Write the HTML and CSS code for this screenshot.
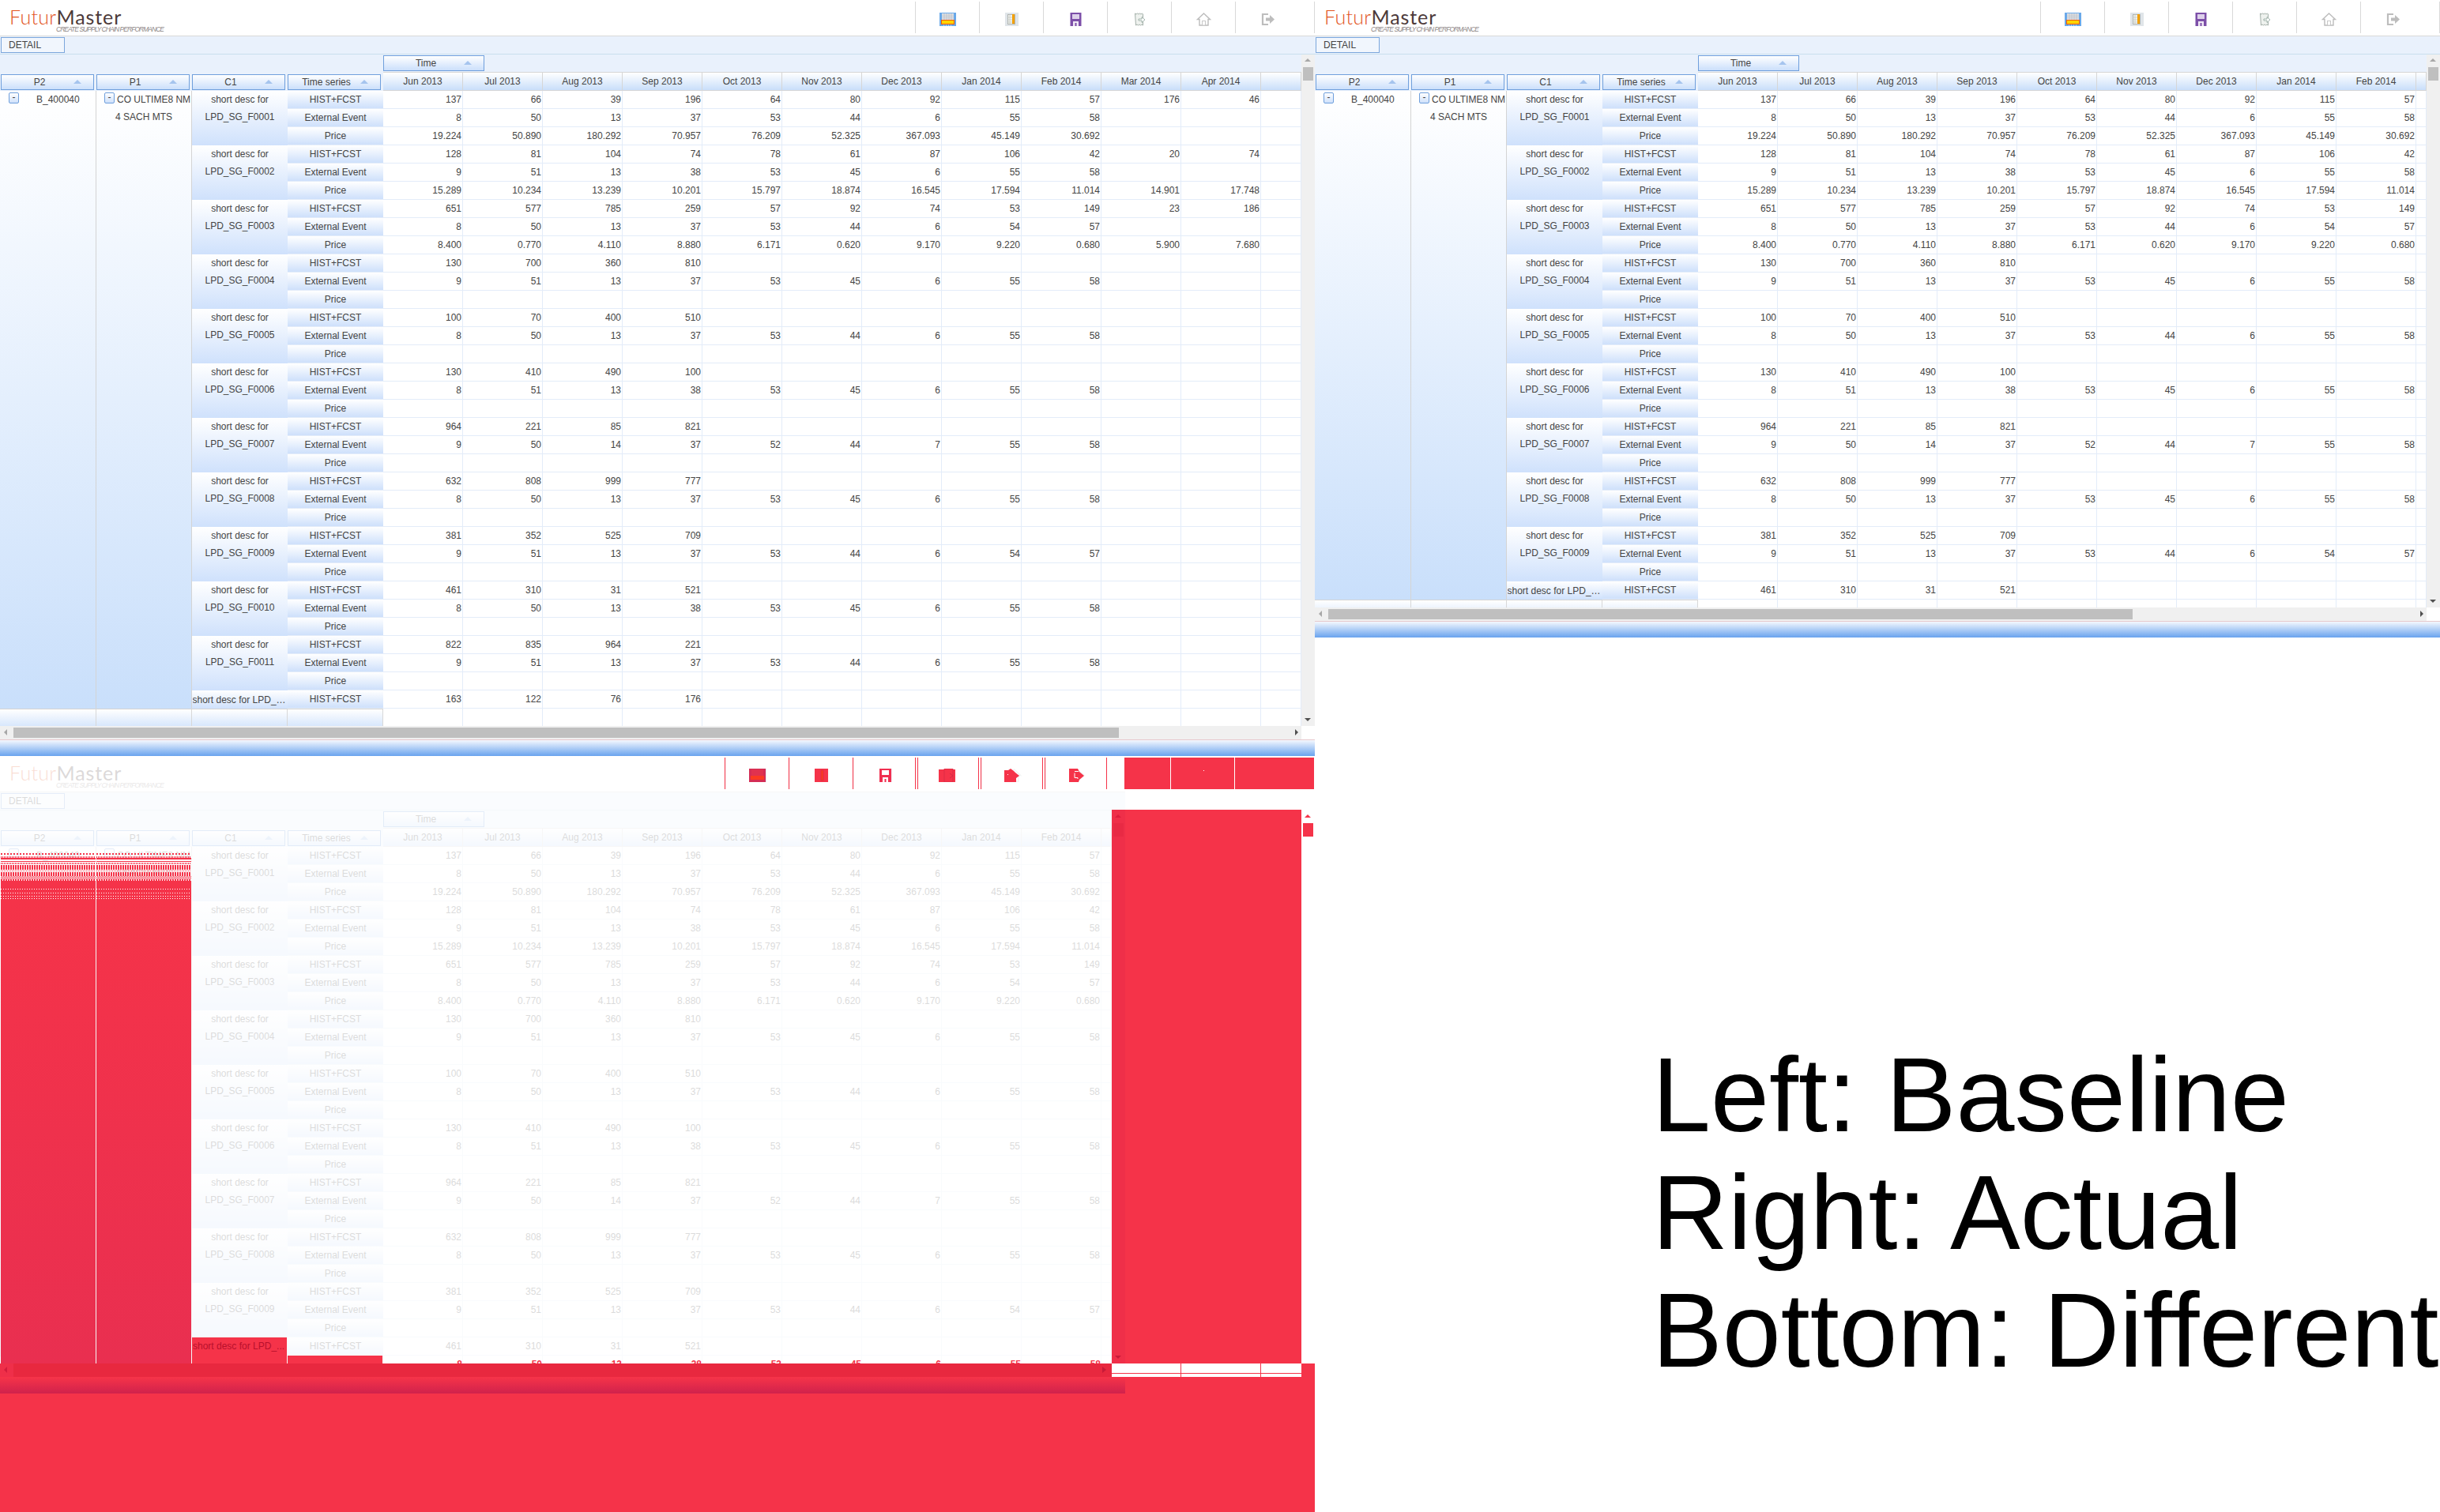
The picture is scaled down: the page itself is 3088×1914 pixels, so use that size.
FILE: index.html
```html
<!DOCTYPE html>
<html lang="en">
<head>
<meta charset="utf-8">
<title>Baseline / Actual / Different</title>
<link rel="stylesheet" href="styles.css">
</head>
<body>
<svg class="sprite" aria-hidden="true">
  <symbol id="i-a" viewBox="0 0 21 17">
    <rect width="21" height="17" fill="#6aa9e9"/>
    <rect x="3" y="1" width="15" height="8" fill="#e4e6ea"/>
    <path d="M3 3h15M3 5h15M3 7h15M6 1v8M9 1v8M12 1v8M15 1v8" stroke="#b4b8c0" stroke-width=".6"/>
    <rect x="2.500" y="9.500" width="16" height="5" fill="#ffd500" stroke="#ee5a00"/>
    <path d="M5 16h1M8 16h1M11 16h1M14 16h1" stroke="#e8eef6"/>
  </symbol>
  <symbol id="i-b" viewBox="0 0 21 17">
    <rect x="2" width="17" height="17" fill="#e0e5e9"/>
    <rect x="5.500" y="2.500" width="9" height="12" fill="#f2f3ee" stroke="#b0b4b0"/>
    <path d="M5 6h6M5 9h6M5 12h6M8 2v12" stroke="#c0c4c0" stroke-width=".7"/>
    <rect x="11" y="2" width="3" height="12" fill="#f3a000"/>
  </symbol>
  <symbol id="i-c" viewBox="0 0 21 17">
    <path d="M3.500 0h14v17h-14z" fill="#7c4fa8"/>
    <rect x="6" y="2" width="9" height="6" fill="#ddd0ea"/>
    <rect x="7" y="11" width="7" height="6" fill="#efe8f5"/>
    <rect x="9.500" y="13" width="2" height="4" fill="#7c4fa8"/>
  </symbol>
  <symbol id="i-d" viewBox="0 0 21 17">
    <path d="M4.500 1l1.500 1 1.500-1 1.500 1 1.500-1 1.500 1 1.500-1 1 1v14l-1.500-1-1.500 1-1.500-1-1.500 1-1.500-1-1.500 1z" fill="#eff2ef" stroke="#a3afa9"/>
    <path d="M9 8h4V5.500l4 3.500-4 3.500V10H9z" fill="#fff" stroke="#8ea39a" stroke-width=".8"/>
  </symbol>
  <symbol id="i-e" viewBox="0 0 21 17">
    <path d="M10.500 1L18.500 8.500H16V16H5V8.500H2.500z" fill="#fff" stroke="#bcbcbc" stroke-width="1.400"/>
    <rect x="8.500" y="10.500" width="4" height="5.500" fill="#fff" stroke="#c8c8c8"/>
  </symbol>
  <symbol id="i-f" viewBox="0 0 21 17">
    <path d="M11 2H4v13h7" fill="none" stroke="#bdbdbd" stroke-width="2.200"/>
    <path d="M8 6.500h5V3l6 5.500-6 5.500v-3.500H8z" fill="#bdbdbd"/>
  </symbol>
  <symbol id="m-a" viewBox="0 0 21 17">
    <rect width="21" height="17" fill="#d42d55"/>
    <rect x="3" y="1" width="15" height="8" fill="#e0324f"/>
    <rect x="2" y="9" width="17" height="5" fill="#fb3a22"/>
  </symbol>
  <symbol id="m-b" viewBox="0 0 17 17">
    <rect width="17" height="17" fill="#f53349"/>
    <rect x="8" y="2" width="3" height="13" fill="#fb3a22" stroke="#d42a45" stroke-width=".6"/>
  </symbol>
  <symbol id="m-c" viewBox="0 0 15 17">
    <rect width="15" height="17" fill="#f02f50"/>
    <rect x="3" y="2" width="9" height="6" fill="#fff"/>
    <rect x="4" y="11" width="7" height="6" fill="#fff"/>
    <rect x="6.500" y="13" width="2" height="4" fill="#f02f50"/>
  </symbol>
  <symbol id="m-d" viewBox="0 0 21 17">
    <rect y="1" width="21" height="16" fill="#f53349"/>
    <rect x="7" width="11" height="17" fill="#f53349" stroke="#d42a45" stroke-width=".7"/>
    <path d="M14 6l4 3-4 3" fill="none" stroke="#d42a45"/>
  </symbol>
  <symbol id="m-e" viewBox="0 0 19 17">
    <path d="M0 2H5L8 0 12 3 14 5 19 9 15 12V17H0z" fill="#f53349"/>
    <rect x="4" y="7" width="1" height="1" fill="#fff"/>
  </symbol>
  <symbol id="m-f" viewBox="0 0 19 17">
    <path d="M0 0H11L13 4 19 9 13 14 12 17H0z" fill="#f53349"/>
    <path d="M7 3.500h5M7 5.500v6h4V13" fill="none" stroke="#fff"/>
  </symbol>
</svg>

<main class="screen">
  <div class="col col--left">
    <section class="panel panel--base" data-panel="base"></section>
    <section class="diff">
      <div class="panel panel--faded" data-panel="actual"></div>
      <div class="diff-overlay" id="diff-overlay"></div>
    </section>
  </div>
  <div class="col col--right">
    <section class="panel panel--actual" data-panel="actual"></section>
    <p class="legend">Left: Baseline<br>Right: Actual<br>Bottom: Different</p>
  </div>
</main>
<script src="script.js"></script>
</body>
</html>
```

FILE: styles.css
```css
* { box-sizing: border-box; }
html, body { margin: 0; padding: 0; background: #fff; }
html { overflow: hidden; }
body { width: 3088px; height: 1914px; overflow: hidden; font: 12px/22px "Liberation Sans", Arial, sans-serif; color: #444; }
.sprite { position: absolute; width: 0; height: 0; }
.screen { display: flex; width: 3088px; height: 1914px; }
.col { display: flex; flex-direction: column; }
.col--left { width: 1664px; }
.col--right { width: 1424px; }

/* panel */
.panel { display: flex; flex-direction: column; width: 100%; background: #fff; }
.panel--base { height: 957px; }
.panel--actual { height: 807px; }
.panel--faded { width: 1424px; height: 807px; opacity: .19; }

.toolbar { display: flex; justify-content: space-between; height: 46px; border-bottom: 1px solid #d9d9d9; flex: none; }
.logo { padding: 9px 0 0 12px; width: 230px; }
.logo-name { display: block; font: 300 25px/25px Lato, "Open Sans", sans-serif; white-space: nowrap; }
.logo-futur { color: #e2541c; letter-spacing: .3px; }
.logo-master { color: #4c3a3a; font-weight: 400; letter-spacing: .9px; }
.logo-tag { display: block; margin: -1px 0 0 59px; font: italic 8.500px/9px "Liberation Sans", sans-serif; letter-spacing: -.97px; color: #8d8585; white-space: nowrap; }
.tools { display: flex; margin-top: 2px; height: 40px; }
.tool { width: 81px; border-left: 1px solid #d9d9d9; padding: 14px 0 0 30px; }
.tool--last { width: 101px; border-right: 1px solid #d9d9d9; }
.tool svg { display: block; width: 21px; height: 17px; }

.detail-bar { height: 23px; flex: none; padding-top: 1px; background: #e9f1fc; border-bottom: 1px solid #c9dfee; padding-left: 1px; }
.detail-btn { display: block; width: 81px; height: 20px; padding-left: 9px; line-height: 19px; background: #f1f6fd; border: 1px solid #7ba6dc; }

.work { display: flex; flex: 1; min-height: 0; }
.viewport { flex: 1; min-width: 0; overflow: hidden; background: #fff; }
.grid { table-layout: fixed; width: 100%; border-collapse: separate; border-spacing: 0; }
.grid td, .grid th { height: 23px; padding: 0; font-weight: normal; overflow: hidden; white-space: nowrap; }
.grid .head-row-time th { height: 22px; }
.grid .head-row-sort th { height: 24px; }
.col-p2 { width: 122px; }
.col-x { width: 121px; }
.col-m { width: 101px; }

.head-blank { background: #e9f1fc; }
.grid .head-time { background: #e9f1fc; padding: 1px 0; }
.grid .head-btn-cell { background: #e9f1fc; padding: 2px 3px 1px 0; }
.grid .head-btn-cell--first { padding-left: 1px; }
.sort-btn { position: relative; display: block; height: 20px; padding-right: 20px; text-align: center; line-height: 18px; border: 1px solid #6f9fdc; background: linear-gradient(#fff, #cbdffb); }
.sort-btn--time { width: 128px; }
.sort-btn::after { content: ""; position: absolute; right: 15px; top: 6px; border-style: solid; border-width: 0 5px 5px; border-color: transparent transparent #a5c4ee; }
.grid .month { text-align: center; background: linear-gradient(#fff, #c9defa); border-right: 1px solid #d6d6d6; border-top: 1px solid #d6d6d6; border-bottom: 1px solid #d6d6d6; }

.grid .tall { vertical-align: top; background: linear-gradient(#fff, #c9dffb); border-right: 1px solid #d4d4d4; overflow: hidden; }
.tall-line { display: flex; align-items: flex-start; height: 22px; overflow: hidden; }
.tall-line--p2 { padding-left: 11px; gap: 22px; }
.tall-line--p1 { padding-left: 10px; gap: 3px; }
.tall-line--center { justify-content: center; }
.minus { display: block; flex: none; width: 13px; height: 14px; margin-top: 2px; line-height: 11px; text-align: center; border: 1px solid #6f9fdc; border-radius: 2px; background: linear-gradient(#fff, #cfe1fb); }
.grid .group { vertical-align: top; text-align: center; background: linear-gradient(#fff, #cfe1fc); }
.grid .group--single { vertical-align: middle; }
.clip { display: block; width: 120px; overflow: hidden; text-overflow: ellipsis; margin: 0 auto; }
.grid .series { text-align: center; background: linear-gradient(#fff, #cee0fb); border-bottom: 1px solid #e3ecf9; }
.grid .val { text-align: right; padding-right: 1px; background: #fff; border-right: 1px solid #e3ecf9; border-bottom: 1px solid #e3ecf9; }
.grid .foot { background: linear-gradient(#fff, #d6e6fc); border-top: 1px solid #d4d4d4; border-right: 1px solid #d8d8d8; }

/* scrollbars */
.vbar { position: relative; width: 17px; flex: none; background: #f0f0f0; }
.vthumb { position: absolute; left: 2px; top: 16px; width: 13px; height: 17px; background: #bfbfbf; }
.arrow { position: absolute; border-style: solid; border-color: transparent; }
.arrow--up { left: 4px; top: 5px; border-width: 0 4px 4px; border-bottom-color: #a8a8a8; }
.arrow--down { left: 4px; bottom: 6px; border-width: 4px 4px 0; border-top-color: #505050; }
.arrow--left { left: 5px; top: 4px; border-width: 4px 4px 4px 0; border-right-color: #a8a8a8; }
.arrow--right { right: 4px; top: 4px; border-width: 4px 0 4px 4px; border-left-color: #505050; }
.hrow { display: flex; height: 17px; flex: none; }
.hbar { position: relative; flex: 1; background: #f0f0f0; padding: 2px 0 2px 17px; }
.hthumb { height: 13px; background: #bfbfbf; }
.panel--base .hthumb { width: 1399px; }
.panel--actual .hthumb, .panel--faded .hthumb { width: 1018px; }
.hcorner { width: 17px; background: #fff; }
.rule { height: 1px; flex: none; background: #e6c8cc; }
.glow { height: 20px; flex: none; background: linear-gradient(#f4f8fe, #69a3ee); }

/* legend */
.legend { margin: 0; padding: 505px 0 0 427px; font: 133px/149px "Liberation Sans", Arial, sans-serif; color: #000; white-space: nowrap; }

/* difference panel */
.diff { position: relative; height: 957px; overflow: hidden; background: #fff; }
.diff-overlay { position: absolute; inset: 0; }
.ov { position: absolute; }
.red { background: #f53349; }
.ov-tick { top: 2px; width: 1px; height: 40px; background: #f53349; }
.ov-block { top: 2px; height: 40px; }
.ov-pixel { left: 41px; top: 16px; width: 1px; height: 1px; background: #fff; }
.ov-mark { top: 16px; height: 17px; }
.ov-main { left: 1407px; top: 68px; width: 240px; height: 701px; }
.ov-main-edge { position: absolute; left: 0; top: 0; width: 17px; height: 100%; background: #ef2f49; }
.ov-main-thumb { position: absolute; left: 2px; top: 17px; width: 13px; height: 17px; background: #e82a44; }
.ov-arrow-up { position: absolute; left: 4px; top: 6px; border-style: solid; border-color: transparent; border-width: 0 4px 4px; border-bottom-color: #dd1c3c; }
.ov-arrow-down { position: absolute; left: 4px; bottom: 6px; border-style: solid; border-color: transparent; border-width: 4px 4px 0; border-top-color: #c81a38; }
.ov-side-arrow { left: 1651px; top: 74px; border-style: solid; border-color: transparent; border-width: 0 4px 4px; border-bottom-color: #f53349; }
.ov-side-thumb { left: 1649px; top: 85px; width: 13px; height: 17px; }
.ov-column { top: 123px; height: 646px; width: 120px; display: flex; flex-direction: column; }
.ov-column--p2 { left: 1px; }
.ov-column--p1 { left: 122px; }
.s { flex: none; }
.s-gap { background: transparent; }
.s-solid { background: #f53349; }
.s-dots { background: repeating-linear-gradient(90deg, #f53349 0 2px, transparent 2px 4px); }
.s-dense { background: repeating-linear-gradient(90deg, #f53349 0 1px, transparent 1px 2px); }
.s-stripes { background: repeating-linear-gradient(90deg, #f53349 0 2px, transparent 2px 3px); }
.s-check { background: repeating-conic-gradient(#f53349 0 25%, transparent 0 50%) 0 0 / 2px 2px; }
.s-white { background: repeating-linear-gradient(90deg, #fff 0 1px, #f53349 1px 3px); }
.s-rest { flex: 1; background: linear-gradient(#f53349, #e92f50); }
.ov-cell { left: 243px; top: 736px; width: 120px; height: 33px; padding-left: 1px; color: #b8102c; white-space: nowrap; overflow: hidden; }
.ov-series { left: 364px; top: 759px; width: 120px; height: 10px; }
.ov-vals { left: 485px; top: 759px; height: 10px; display: flex; overflow: hidden; color: #f53349; font-weight: bold; }
.ov-val { width: 101px; padding-right: 1px; text-align: right; }
.ov-tail { left: 0; top: 769px; width: 1664px; bottom: 0; }
.ov-tail-bar { position: absolute; left: 0; top: 0; width: 1407px; height: 17px; padding-left: 17px; background: #ef2f49; }
.ov-tail-thumb { display: block; height: 17px; background: #e8283f; }
.ov-tail-left { position: absolute; left: 5px; top: 4px; border-style: solid; border-color: transparent; border-width: 4px 4px 4px 0; border-right-color: #d41c3c; }
.ov-tail-right { position: absolute; left: 1395px; top: 4px; border-style: solid; border-color: transparent; border-width: 4px 0 4px 5px; border-left-color: #c81a38; }
.ov-tail-glow { position: absolute; left: 0; top: 18px; width: 1424px; height: 20px; background: linear-gradient(#f53349, #d0224c); }
.ov-tail-white { position: absolute; left: 1407px; top: 0; width: 240px; height: 17px; background: #fff; }
.ov-tail-white::before { content: ""; position: absolute; left: 0; top: 12px; width: 100%; height: 1px; background: #f53349; }
.ov-tail-line { position: absolute; top: 0; width: 1px; height: 17px; background: #f53349; }
```

FILE: script.js
```javascript
var MONTHS = ['Jun 2013','Jul 2013','Aug 2013','Sep 2013','Oct 2013','Nov 2013','Dec 2013','Jan 2014','Feb 2014','Mar 2014','Apr 2014'];

var ITEMS = [
  [['137','66','39','196','64','80','92','115','57','176','46'],['8','50','13','37','53','44','6','55','58'],['19.224','50.890','180.292','70.957','76.209','52.325','367.093','45.149','30.692']],
  [['128','81','104','74','78','61','87','106','42','20','74'],['9','51','13','38','53','45','6','55','58'],['15.289','10.234','13.239','10.201','15.797','18.874','16.545','17.594','11.014','14.901','17.748']],
  [['651','577','785','259','57','92','74','53','149','23','186'],['8','50','13','37','53','44','6','54','57'],['8.400','0.770','4.110','8.880','6.171','0.620','9.170','9.220','0.680','5.900','7.680']],
  [['130','700','360','810'],['9','51','13','37','53','45','6','55','58'],[]],
  [['100','70','400','510'],['8','50','13','37','53','44','6','55','58'],[]],
  [['130','410','490','100'],['8','51','13','38','53','45','6','55','58'],[]],
  [['964','221','85','821'],['9','50','14','37','52','44','7','55','58'],[]],
  [['632','808','999','777'],['8','50','13','37','53','45','6','55','58'],[]],
  [['381','352','525','709'],['9','51','13','37','53','44','6','54','57'],[]],
  [['461','310','31','521'],['8','50','13','38','53','45','6','55','58'],[]],
  [['822','835','964','221'],['9','51','13','37','53','44','6','55','58'],[]],
  [['163','122','76','176'],[],[]]
];
var SERIES = ['HIST+FCST','External Event','Price'];
var ICONS = ['i-a','i-b','i-c','i-d','i-e','i-f'];
var CONFIG = { base: { months: 11, full: 11 }, actual: { months: 9, full: 9 } };

function code(i) { return 'LPD_SG_F' + ('000' + (i + 1)).slice(-4); }

function valueCells(values, n) {
  var out = '';
  for (var m = 0; m < n; m++) out += '<td class="val">' + (values[m] || '') + '</td>';
  return out + '<td class="val"></td>';
}

function buildRows(cfg) {
  var n = cfg.months, total = cfg.full * 3 + 1, html = '';
  for (var i = 0; i <= cfg.full; i++) {
    var single = i === cfg.full;
    var count = single ? 1 : 3;
    for (var j = 0; j < count; j++) {
      html += '<tr>';
      if (i === 0 && j === 0) {
        html += '<td class="tall" rowspan="' + total + '"><div class="tall-line tall-line--p2"><span class="minus">-</span><span>B_400040</span></div></td>';
        html += '<td class="tall" rowspan="' + total + '"><div class="tall-line tall-line--p1"><span class="minus">-</span><span>CO ULTIME8 NM</span></div><div class="tall-line tall-line--center">4 SACH MTS</div></td>';
      }
      if (j === 0) {
        html += single
          ? '<td class="group group--single"><span class="clip">short desc for ' + code(i) + '</span></td>'
          : '<td class="group" rowspan="3">short desc for<br>' + code(i) + '</td>';
      }
      html += '<td class="series">' + SERIES[j] + '</td>' + valueCells(ITEMS[i][j], n) + '</tr>';
    }
  }
  html += '<tr><td class="foot"></td><td class="foot"></td><td class="foot"></td><td class="foot"></td>' + valueCells([], n) + '</tr>';
  return html;
}

function buildPanel(cfg) {
  var n = cfg.months, cols = '<col class="col-p2"><col class="col-x"><col class="col-x"><col class="col-x">', heads = '';
  for (var m = 0; m < n; m++) {
    cols += '<col class="col-m">';
    heads += '<th class="month">' + MONTHS[m] + '</th>';
  }
  var tools = ICONS.map(function (id, i) {
    return '<div class="tool' + (i === 5 ? ' tool--last' : '') + '"><svg><use href="#' + id + '"></use></svg></div>';
  }).join('');
  var sortHead = ['P2','P1','C1','Time series'].map(function (t, i) {
    return '<th class="head-btn-cell' + (i === 0 ? ' head-btn-cell--first' : '') + '"><span class="sort-btn">' + t + '</span></th>';
  }).join('');
  return '<header class="toolbar"><div class="logo"><span class="logo-name"><span class="logo-futur">Futur</span><span class="logo-master">Master</span></span><span class="logo-tag">CREATE SUPPLY CHAIN PERFORMANCE</span></div><div class="tools">' + tools + '</div></header>' +
    '<div class="detail-bar"><span class="detail-btn">DETAIL</span></div>' +
    '<div class="work"><div class="viewport"><table class="grid"><colgroup>' + cols + '<col></colgroup>' +
    '<thead><tr class="head-row-time"><th class="head-blank" colspan="4"></th><th class="head-time" colspan="' + (n + 1) + '"><span class="sort-btn sort-btn--time">Time</span></th></tr>' +
    '<tr class="head-row-sort">' + sortHead + heads + '<th class="month"></th></tr></thead>' +
    '<tbody>' + buildRows(cfg) + '</tbody></table></div>' +
    '<div class="vbar"><i class="arrow arrow--up"></i><div class="vthumb"></div><i class="arrow arrow--down"></i></div></div>' +
    '<div class="hrow"><div class="hbar"><i class="arrow arrow--left"></i><div class="hthumb"></div><i class="arrow arrow--right"></i></div><div class="hcorner"></div></div>' +
    '<div class="rule"></div><div class="glow"></div>';
}

document.querySelectorAll('[data-panel]').forEach(function (el) {
  el.innerHTML = buildPanel(CONFIG[el.getAttribute('data-panel')]);
});

function ov(cls, left, width, inner) {
  var st = 'left:' + left + 'px;';
  if (width !== null) st += 'width:' + width + 'px;';
  return '<div class="ov ' + cls + '" style="' + st + '">' + (inner || '') + '</div>';
}

function strips() {
  var seq = [['dots',2],['gap',2],['dense',2],['solid',2],['gap',2],['solid',1],['gap',1],['dense',2],['gap',1],['stripes',6],['gap',1],['dense',1],['gap',1],['stripes',5],['check',4],['stripes',2],['solid',10],['white',1],['solid',4],['white',1],['solid',3],['white',1],['solid',2],['white',1]];
  return seq.map(function (s) {
    return '<div class="s s-' + s[0] + '" style="height:' + s[1] + 'px"></div>';
  }).join('') + '<div class="s-rest"></div>';
}

(function () {
  var html = '';
  [917, 998, 1079, 1158, 1161, 1238, 1241, 1319, 1322, 1400].forEach(function (x) { html += ov('ov-tick', x, null); });
  [[948,21,'m-a'],[1031,17,'m-b'],[1113,15,'m-c'],[1188,21,'m-d'],[1271,19,'m-e'],[1353,19,'m-f']].forEach(function (m) {
    html += ov('ov-mark', m[0], m[1], '<svg width="' + m[1] + '" height="17"><use href="#' + m[2] + '"></use></svg>');
  });
  [[1423,58],[1482,80],[1563,100]].forEach(function (b, i) {
    html += ov('ov-block red', b[0], b[1], i === 1 ? '<div class="ov ov-pixel"></div>' : '');
  });
  html += '<div class="ov ov-main red"><i class="ov-main-edge"></i><i class="ov-arrow-up"></i><i class="ov-main-thumb"></i><i class="ov-arrow-down"></i></div>';
  html += '<div class="ov ov-side-arrow"></div><div class="ov ov-side-thumb red"></div>';
  html += '<div class="ov ov-column ov-column--p2">' + strips() + '</div><div class="ov ov-column ov-column--p1">' + strips() + '</div>';
  html += '<div class="ov ov-cell red">short desc for LPD_...</div><div class="ov ov-series red"></div>';
  html += '<div class="ov ov-vals">' + ITEMS[9][1].map(function (v) { return '<span class="ov-val">' + v + '</span>'; }).join('') + '</div>';
  html += '<div class="ov ov-tail red"><div class="ov-tail-bar"><i class="ov-tail-left"></i><i class="ov-tail-thumb"></i><i class="ov-tail-right"></i></div><div class="ov-tail-glow"></div><div class="ov-tail-white"><i class="ov-tail-line" style="left:87px"></i><i class="ov-tail-line" style="left:188px"></i></div></div>';
  document.getElementById('diff-overlay').innerHTML = html;
})();
```
